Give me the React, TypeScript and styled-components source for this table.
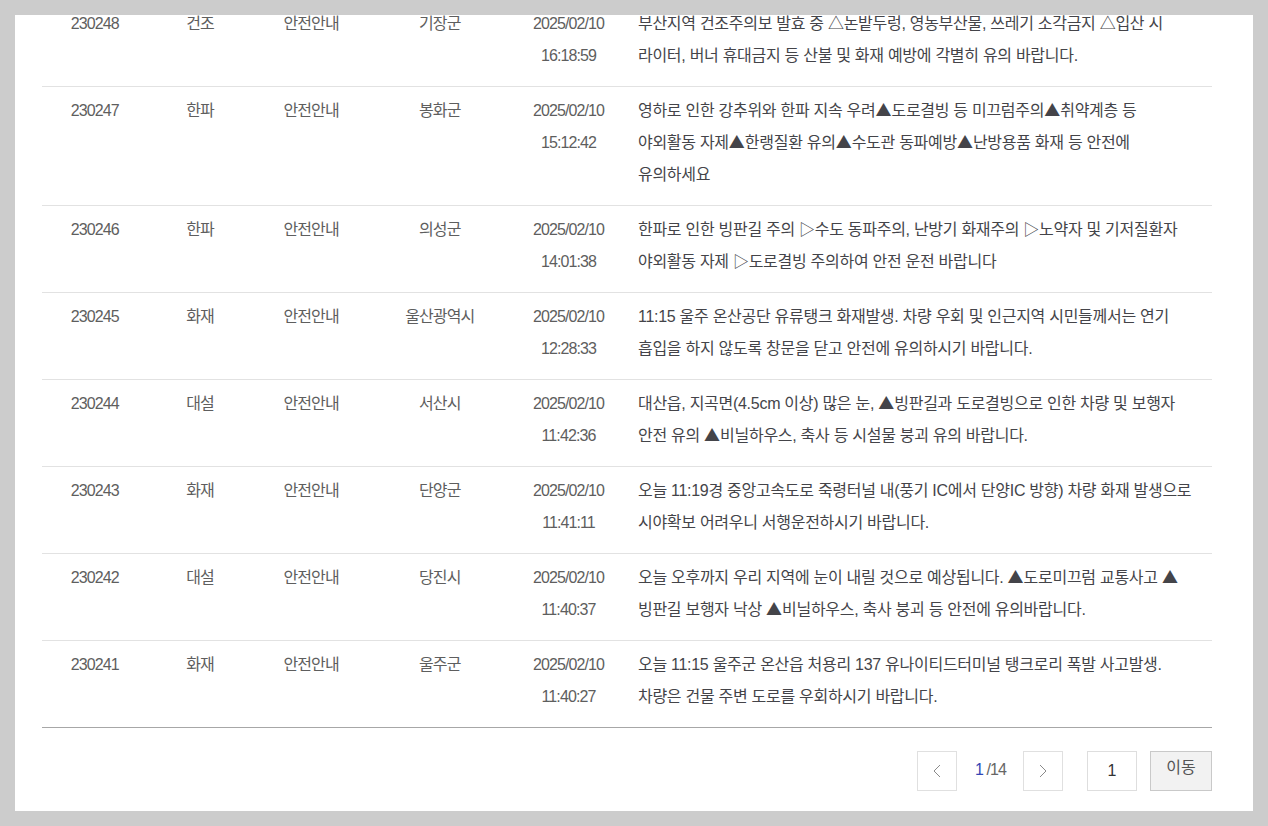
import React, { useLayoutEffect, useRef } from 'react';
import styled, { createGlobalStyle } from 'styled-components';

const GlobalStyle = createGlobalStyle`
  html, body { margin: 0; padding: 0; background: #cccccc; }
  body { font-family: "Liberation Sans", "Noto Sans CJK KR", sans-serif; }
  * { box-sizing: border-box; }
`;

const Frame = styled.div`
  width: 100vw;
  height: 100vh;
  padding: 15px;
  background: #cccccc;
`;

const Panel = styled.div`
  height: 796px;
  background: #ffffff;
  overflow-y: auto;
  scrollbar-width: none;
  &::-webkit-scrollbar { display: none; }
`;

const Content = styled.div`
  padding: 0 41px 20px 27px;
`;

const Table = styled.table`
  width: 100%;
  border-collapse: collapse;
  table-layout: fixed;
  font-size: 16px;
  letter-spacing: -0.9px;
`;

const Row = styled.tr<{ $last?: boolean }>`
  & > td {
    border-bottom: 1px solid ${(p) => (p.$last ? '#a7a7a7' : '#e2e2e2')};
  }
`;

const Cell = styled.td`
  padding: 8px 0 14px;
  line-height: 32px;
  vertical-align: top;
  text-align: center;
  color: #5e5e5e;
`;

const Line = styled.span`
  display: block;
  white-space: nowrap;
`;

const MessageCell = styled(Cell)`
  text-align: left;
  padding-left: 11px;
  padding-right: 6px;
  color: #444449;
  letter-spacing: -0.28px;
`;

const Sym = styled.span`
  font-family: "Noto Sans CJK KR", sans-serif;
  line-height: 1;
  letter-spacing: 0;
`;

const Pagination = styled.div`
  display: flex;
  justify-content: flex-end;
  align-items: center;
  gap: 24px;
  margin-top: 23px;
`;

const Pager = styled.div`
  display: flex;
  align-items: center;
  height: 40px;
`;

const ArrowButton = styled.button<{ $side: 'left' | 'right' }>`
  width: 40px;
  height: 40px;
  border: 1px solid #e0e0e0;
  background: #ffffff;
  display: flex;
  align-items: center;
  justify-content: center;
  padding: 0;
  margin: ${(p) => (p.$side === 'left' ? '0 18px 0 0' : '0 0 0 17px')};
  cursor: pointer;
`;

const PageInfo = styled.span`
  font-size: 16px;
  letter-spacing: -0.9px;
  color: #666666;
  line-height: 37px;
  align-self: flex-start;
`;

const Current = styled.span`
  color: #3347b5;
`;

const GoGroup = styled.div`
  display: flex;
  align-items: center;
  gap: 13px;
`;

const PageInput = styled.input`
  width: 50px;
  height: 40px;
  border: 1px solid #dedede;
  text-align: center;
  font-family: "Liberation Sans", "Noto Sans CJK KR", sans-serif;
  font-size: 16px;
  color: #333333;
  padding: 0;
  outline: none;
`;

const GoButton = styled.button`
  width: 62px;
  height: 40px;
  border: 1px solid #c9c9c9;
  background: #f2f2f2;
  font-family: "Liberation Sans", "Noto Sans CJK KR", sans-serif;
  font-size: 16px;
  color: #555555;
  padding: 0 0 10px;
  cursor: pointer;
`;

type Item = {
  id: string;
  type: string;
  kind: string;
  region: string;
  date: string;
  time: string;
  message: string[];
};

const items: Item[] = [
  {
    id: '230248', type: '건조', kind: '안전안내', region: '기장군', date: '2025/02/10', time: '16:18:59',
    message: [
      '부산지역 건조주의보 발효 중 △논밭두렁, 영농부산물, 쓰레기 소각금지 △입산 시',
      '라이터, 버너 휴대금지 등 산불 및 화재 예방에 각별히 유의 바랍니다.',
    ],
  },
  {
    id: '230247', type: '한파', kind: '안전안내', region: '봉화군', date: '2025/02/10', time: '15:12:42',
    message: [
      '영하로 인한 강추위와 한파 지속 우려▲도로결빙 등 미끄럼주의▲취약계층 등',
      '야외활동 자제▲한랭질환 유의▲수도관 동파예방▲난방용품 화재 등 안전에',
      '유의하세요',
    ],
  },
  {
    id: '230246', type: '한파', kind: '안전안내', region: '의성군', date: '2025/02/10', time: '14:01:38',
    message: [
      '한파로 인한 빙판길 주의 ▷수도 동파주의, 난방기 화재주의 ▷노약자 및 기저질환자',
      '야외활동 자제 ▷도로결빙 주의하여 안전 운전 바랍니다',
    ],
  },
  {
    id: '230245', type: '화재', kind: '안전안내', region: '울산광역시', date: '2025/02/10', time: '12:28:33',
    message: [
      '11:15 울주 온산공단 유류탱크 화재발생. 차량 우회 및 인근지역 시민들께서는 연기',
      '흡입을 하지 않도록 창문을 닫고 안전에 유의하시기 바랍니다.',
    ],
  },
  {
    id: '230244', type: '대설', kind: '안전안내', region: '서산시', date: '2025/02/10', time: '11:42:36',
    message: [
      '대산읍, 지곡면(4.5cm 이상) 많은 눈, ▲빙판길과 도로결빙으로 인한 차량 및 보행자',
      '안전 유의 ▲비닐하우스, 축사 등 시설물 붕괴 유의 바랍니다.',
    ],
  },
  {
    id: '230243', type: '화재', kind: '안전안내', region: '단양군', date: '2025/02/10', time: '11:41:11',
    message: [
      '오늘 11:19경 중앙고속도로 죽령터널 내(풍기 IC에서 단양IC 방향) 차량 화재 발생으로',
      '시야확보 어려우니 서행운전하시기 바랍니다.',
    ],
  },
  {
    id: '230242', type: '대설', kind: '안전안내', region: '당진시', date: '2025/02/10', time: '11:40:37',
    message: [
      '오늘 오후까지 우리 지역에 눈이 내릴 것으로 예상됩니다. ▲도로미끄럼 교통사고 ▲',
      '빙판길 보행자 낙상 ▲비닐하우스, 축사 붕괴 등 안전에 유의바랍니다.',
    ],
  },
  {
    id: '230241', type: '화재', kind: '안전안내', region: '울주군', date: '2025/02/10', time: '11:40:27',
    message: [
      '오늘 11:15 울주군 온산읍 처용리 137 유나이티드터미널 탱크로리 폭발 사고발생.',
      '차량은 건물 주변 도로를 우회하시기 바랍니다.',
    ],
  },
];

const renderLine = (line: string) =>
  line.split(/(▲)/).map((part, i) =>
    part === '▲' ? <Sym key={i}>▲</Sym> : <React.Fragment key={i}>{part}</React.Fragment>
  );

const Chevron = ({ dir }: { dir: 'left' | 'right' }) => (
  <svg width="8" height="14" viewBox="0 0 8 14" fill="none">
    <polyline
      points={dir === 'left' ? '7,1 1,7 7,13' : '1,1 7,7 1,13'}
      stroke="#8a8a8a"
      strokeWidth="1"
    />
  </svg>
);

export default function App() {
  const panelRef = useRef<HTMLDivElement>(null);
  useLayoutEffect(() => {
    if (panelRef.current) panelRef.current.scrollTop = 15;
  }, []);

  return (
    <>
      <GlobalStyle />
      <Frame>
        <Panel ref={panelRef}>
          <Content>
            <Table>
              <colgroup>
                <col style={{ width: '9%' }} />
                <col style={{ width: '9%' }} />
                <col style={{ width: '10%' }} />
                <col style={{ width: '12%' }} />
                <col style={{ width: '10%' }} />
                <col />
              </colgroup>
              <tbody>
                {items.map((it, i) => (
                  <Row key={it.id} $last={i === items.length - 1}>
                    <Cell>{it.id}</Cell>
                    <Cell>{it.type}</Cell>
                    <Cell>{it.kind}</Cell>
                    <Cell>{it.region}</Cell>
                    <Cell>
                      <Line>{it.date}</Line>
                      <Line>{it.time}</Line>
                    </Cell>
                    <MessageCell>
                      {it.message.map((line, j) => (
                        <Line key={j}>{renderLine(line)}</Line>
                      ))}
                    </MessageCell>
                  </Row>
                ))}
              </tbody>
            </Table>
            <Pagination>
              <Pager>
                <ArrowButton $side="left" aria-label="이전">
                  <Chevron dir="left" />
                </ArrowButton>
                <PageInfo>
                  <Current>1</Current> /14
                </PageInfo>
                <ArrowButton $side="right" aria-label="다음">
                  <Chevron dir="right" />
                </ArrowButton>
              </Pager>
              <GoGroup>
                <PageInput defaultValue="1" />
                <GoButton>이동</GoButton>
              </GoGroup>
            </Pagination>
          </Content>
        </Panel>
      </Frame>
    </>
  );
}
